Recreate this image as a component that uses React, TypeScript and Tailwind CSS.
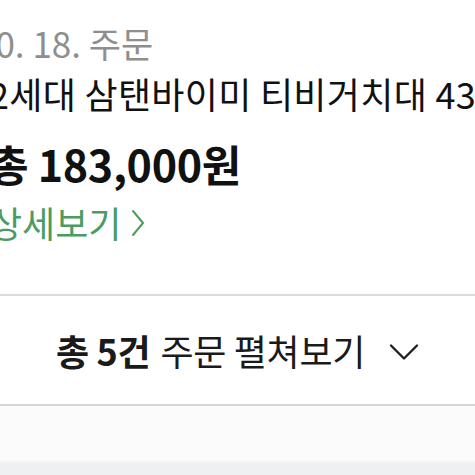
import React from "react";

const font = { fontFamily: '"Noto Sans CJK KR", "Noto Sans", sans-serif' };

function ChevronDown() {
  return (
    <svg width="30" height="18" viewBox="0 0 30 18" fill="none">
      <path d="M2 2.5 L15 15.5 L28 2.5" stroke="#222" strokeWidth="2.4" strokeLinecap="round" strokeLinejoin="round" />
    </svg>
  );
}

function ChevronRight() {
  return (
    <svg width="14" height="28" viewBox="0 0 14 28" fill="none">
      <path d="M2 2 L12 14 L2 26" stroke="#4c9c62" strokeWidth="2" strokeLinecap="round" strokeLinejoin="round" />
    </svg>
  );
}

export default function App() {
  return (
    <div className="w-[475px] h-[475px] overflow-hidden bg-white" style={font}>
      <div className="ml-[-11px] pt-[21px] whitespace-nowrap">
        <p className="ml-[-13px] text-[35px] leading-[44px] text-[#8e8e8e]">10. 18. 주문</p>
        <p className="mt-[6px] text-[36px] leading-[44px] text-[#111] tracking-[0.3px]">2세대 삼탠바이미 티비거치대 43인치</p>
        <p className="mt-[23px] text-[43px] leading-[50px] font-bold text-[#111] tracking-[-0.3px]">총 183,000원</p>
        <p className="mt-[12px] flex items-center text-[36px] leading-[44px] text-[#4c9c62]">
          상세보기
          <span className="ml-[10px] mt-[2px]">
            <ChevronRight />
          </span>
        </p>
      </div>
      <div className="mt-[50px] h-[2px] bg-[#dcdcdc]" />
      <button className="flex h-[108px] w-full items-center justify-center whitespace-nowrap text-[36px] text-[#1a1a1a] tracking-[-0.3px]">
        <span className="font-bold">총 5건</span>
        <span className="ml-[10px]">주문 펼쳐보기</span>
        <span className="ml-[24px] mt-[4px]">
          <ChevronDown />
        </span>
      </button>
      <div className="h-[2px] bg-[#d6d7d9]" />
      <div className="h-[55px] bg-[#fbfbfc]" />
      <div className="h-[2px] bg-[#f3f4f5]" />
      <div className="h-[20px] bg-[#eef0f2]" />
    </div>
  );
}
